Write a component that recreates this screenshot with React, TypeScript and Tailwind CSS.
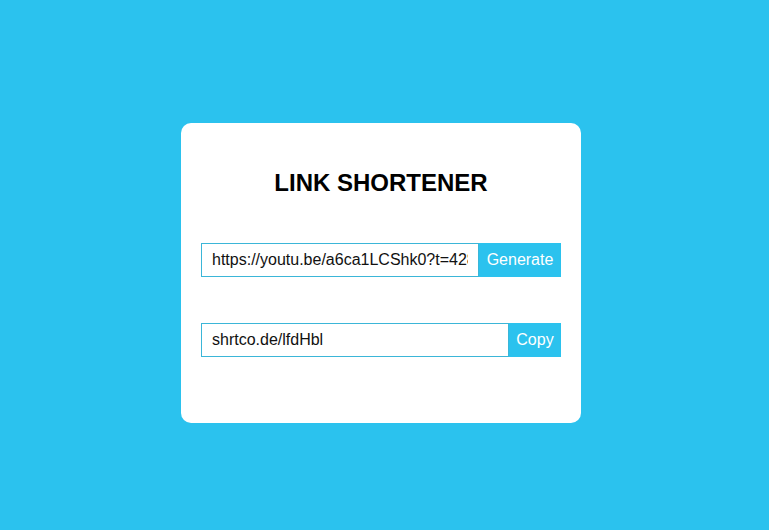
import React, { useState } from "react";

const App = () => {
  const [url, setUrl] = useState("https://youtu.be/a6ca1LCShk0?t=428");
  const [short] = useState("shrtco.de/lfdHbl");

  return (
    <div className="min-h-[530px] w-full bg-[#2bc2ee] flex justify-center pt-[123px] pr-[7px] font-['Liberation_Sans',Arial,sans-serif]">
      <div className="w-[400px] h-[300px] bg-white rounded-[10px] flex flex-col items-center pt-[44px]">
        <h1 className="text-[24px] leading-[32px] font-bold text-black">LINK SHORTENER</h1>
        <div className="flex w-[360px] h-[34px] mt-[44px]">
          <input
            value={url}
            onChange={(e) => setUrl(e.target.value)}
            className="flex-1 min-w-0 border border-[#3bb6d8] px-[10px] text-[16px] text-[#111] outline-none"
          />
          <button className="w-[82px] bg-[#2bc2ee] text-white text-[16px]">Generate</button>
        </div>
        <div className="flex w-[360px] h-[34px] mt-[46px]">
          <input
            value={short}
            readOnly
            className="flex-1 min-w-0 border border-[#3bb6d8] px-[10px] text-[16px] text-[#111] outline-none"
          />
          <button className="w-[52px] bg-[#2bc2ee] text-white text-[16px]">Copy</button>
        </div>
      </div>
    </div>
  );
};

export default App;
